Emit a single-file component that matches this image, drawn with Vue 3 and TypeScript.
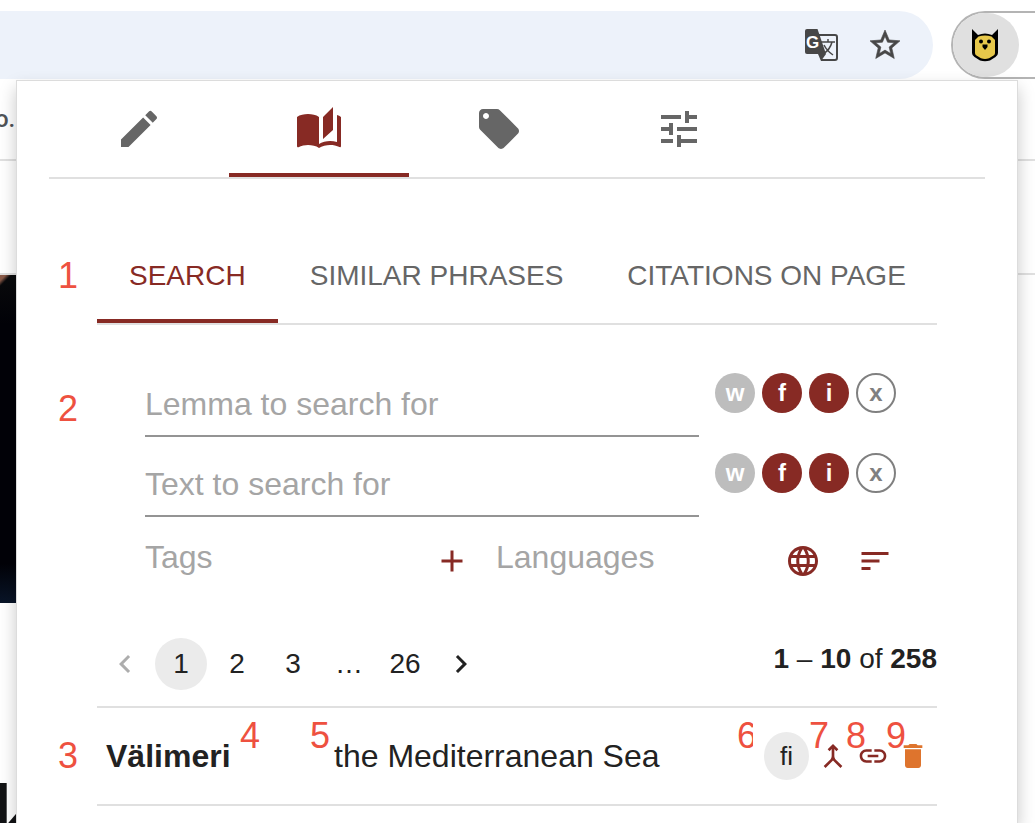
<script setup lang="ts">
import { ref } from 'vue'

interface IconTab {
  id: string
  label: string
  path: string
}

interface SearchField {
  id: string
  placeholder: string
}

interface MatchMode {
  key: string
  label: string
  tone: 'muted' | 'solid' | 'outline'
}

const iconTabs: IconTab[] = [
  {
    id: 'edit',
    label: 'Edit',
    path: 'M3 17.25V21h3.75L17.81 9.94l-3.75-3.75L3 17.25zM20.71 7.04c.39-.39.39-1.02 0-1.41l-2.34-2.34a.9959.9959 0 0 0-1.41 0l-1.83 1.83 3.75 3.75 1.83-1.83z',
  },
  {
    id: 'book',
    label: 'Dictionary',
    path: 'm19 1-5 5v11l5-4.5V1zM1 6v14.65c0 .25.25.5.5.5.1 0 .15-.05.25-.05C3.1 20.45 5.05 20 6.5 20c1.95 0 4.05.4 5.5 1.5V6c-1.45-1.1-3.55-1.5-5.5-1.5S2.45 4.9 1 6zm22 13.5V6c-.6-.45-1.25-.75-2-1v13.5c-1.1-.35-2.3-.5-3.5-.5-1.7 0-4.15.65-5.5 1.5v2c1.35-.85 3.8-1.5 5.5-1.5 1.65 0 3.35.3 4.75 1.05.1.05.15.05.25.05.25 0 .5-.25.5-.5v-1.1z',
  },
  {
    id: 'tags',
    label: 'Tags',
    path: 'M21.41 11.58l-9-9C12.05 2.22 11.55 2 11 2H4c-1.1 0-2 .9-2 2v7c0 .55.22 1.05.59 1.42l9 9c.36.36.86.58 1.41.58s1.05-.22 1.41-.59l7-7c.37-.36.59-.86.59-1.41s-.23-1.06-.59-1.42zM5.5 7C4.67 7 4 6.33 4 5.5S4.67 4 5.5 4 7 4.67 7 5.5 6.33 7 5.5 7z',
  },
  {
    id: 'settings',
    label: 'Settings',
    path: 'M3 17v2h6v-2H3zM3 5v2h10V5H3zm10 16v-2h8v-2h-8v-2h-2v6h2zM7 9v2H3v2h4v2h2V9H7zm14 4v-2H11v2h10zm-6-4h2V7h4V5h-4V3h-2v6z',
  },
]

const textTabs = ['SEARCH', 'SIMILAR PHRASES', 'CITATIONS ON PAGE']

const fields: SearchField[] = [
  { id: 'lemma', placeholder: 'Lemma to search for' },
  { id: 'text', placeholder: 'Text to search for' },
]

const modes: MatchMode[] = [
  { key: 'w', label: 'Whole word', tone: 'muted' },
  { key: 'f', label: 'Fuzzy', tone: 'solid' },
  { key: 'i', label: 'Ignore case', tone: 'solid' },
  { key: 'x', label: 'Regular expression', tone: 'outline' },
]

const activeIconTab = ref('book')
const activeTextTab = ref('SEARCH')
const page = ref(1)
const values = ref<Record<string, string>>({ lemma: '', text: '' })
const tags = ref('')
const languages = ref('')

const rowActions = [
  {
    id: 'merge',
    label: 'Merge',
    path: 'M6.41 21 5 19.59l4.83-4.83c.75-.75 1.17-1.77 1.17-2.83v-5.1L9.41 8.41 8 7l4-4 4 4-1.41 1.41L13 6.83v5.1c0 1.06.42 2.08 1.17 2.83L19 19.59 17.59 21 12 15.41 6.41 21z',
  },
  {
    id: 'link',
    label: 'Link',
    path: 'M3.9 12c0-1.71 1.39-3.1 3.1-3.1h4V7H7c-2.76 0-5 2.24-5 5s2.24 5 5 5h4v-1.9H7c-1.71 0-3.1-1.39-3.1-3.1zM8 13h8v-2H8v2zm9-6h-4v1.9h4c1.71 0 3.1 1.39 3.1 3.1s-1.39 3.1-3.1 3.1h-4V17h4c2.76 0 5-2.24 5-5s-2.24-5-5-5z',
  },
  {
    id: 'delete',
    label: 'Delete',
    path: 'M6 19c0 1.1.9 2 2 2h8c1.1 0 2-.9 2-2V7H6v12zM19 4h-3.5l-1-1h-5l-1 1H5v2h14V4z',
  },
]
</script>

<template>
  <div class="window">
    <div class="backdrop">
      <div class="site-bar"><span>o.</span></div>
      <div class="site-space"></div>
      <div class="photo"></div>
      <div class="headline">k</div>
    </div>

    <header class="toolbar">
      <div class="omnibox">
        <button class="tool" type="button" aria-label="Translate this page">
          <svg class="translate" viewBox="0 0 34 34">
            <path class="sheet" d="M15 7h16a2 2 0 0 1 2 2v21a2 2 0 0 1-2 2H17" />
            <g class="ideograph">
              <path d="M17 14h14M24 11v3M28 14q-2 8-9 12M20 17q3 6 9 10" />
            </g>
            <path d="M3 1h10.500l8.500 25H3a2 2 0 0 1-2-2V3a2 2 0 0 1 2-2z" />
            <path d="M14 26h8l-5 7z" />
            <text class="latin" x="2" y="20">G</text>
          </svg>
        </button>
        <button class="tool" type="button" aria-label="Bookmark this page">
          <svg class="icon-36 star" viewBox="0 0 24 24">
            <path d="M22 9.240l-7.190-.62L12 2 9.190 8.630 2 9.240l5.460 4.730L5.820 21 12 17.270 18.180 21l-1.630-7.030L22 9.240zM12 15.400l-3.760 2.270 1-4.280-3.320-2.880 4.380-.38L12 6.100l1.710 4.040 4.380.38-3.320 2.880 1 4.280L12 15.400z" />
          </svg>
        </button>
      </div>
      <div class="extensions">
        <button class="owl" type="button" aria-label="Open dictionary">
          <svg viewBox="0 0 28 34">
            <path d="M1 1l6 6q7-3 14 0l6-6v24q0 2.500-2.500 4L19 32.500q-5 1.500-10 0L3.500 29Q1 27.500 1 25z" />
            <path class="face" d="M7.500 8.500q6.500-2 13 0L24 12v13q0 1.500-1.500 2.500L18 30.300q-4 1.200-8 0l-4.500-2.800Q4 26.500 4 25V12z" />
            <circle cx="10" cy="13.500" r="2" />
            <circle cx="18" cy="13.500" r="2" />
            <path d="M11.500 16.500h5v2.500L14 22l-2.500-3z" />
          </svg>
        </button>
      </div>
    </header>

    <main class="popup">
      <nav class="icon-tabs" aria-label="Sections">
        <button
          v-for="tab in iconTabs"
          :key="tab.id"
          type="button"
          :aria-label="tab.label"
          :class="{ active: activeIconTab === tab.id }"
          @click="activeIconTab = tab.id"
        >
          <svg viewBox="0 0 24 24"><path :d="tab.path" /></svg>
        </button>
      </nav>

      <section class="panel">
        <nav class="text-tabs" aria-label="Search modes">
          <span class="note n1">1</span>
          <button
            v-for="tab in textTabs"
            :key="tab"
            type="button"
            :class="{ active: activeTextTab === tab }"
            @click="activeTextTab = tab"
          >
            {{ tab }}
          </button>
        </nav>

        <form class="search" @submit.prevent>
          <span class="note n2">2</span>
          <div v-for="field in fields" :key="field.id" class="field-row">
            <input
              v-model="values[field.id]"
              class="field lined"
              type="text"
              :placeholder="field.placeholder"
              :aria-label="field.placeholder"
            />
            <div class="modes">
              <button
                v-for="mode in modes"
                :key="mode.key"
                type="button"
                :class="mode.tone"
                :aria-label="mode.label"
              >
                {{ mode.key }}
              </button>
            </div>
          </div>
          <div class="filter-row">
            <input v-model="tags" class="field" type="text" placeholder="Tags" aria-label="Tags" />
            <button class="filter-button add" type="button" aria-label="Add tag">
              <svg class="icon-36" viewBox="0 0 24 24"><path d="M19 13h-6v6h-2v-6H5v-2h6V5h2v6h6v2z" /></svg>
            </button>
            <input v-model="languages" class="field" type="text" placeholder="Languages" aria-label="Languages" />
            <button class="filter-button" type="button" aria-label="Choose languages">
              <svg class="icon-36" viewBox="0 0 24 24">
                <path d="M11.990 2C6.470 2 2 6.480 2 12s4.470 10 9.990 10C17.520 22 22 17.520 22 12S17.520 2 11.990 2zm6.930 6h-2.950c-.32-1.250-.78-2.450-1.380-3.560 1.840.63 3.370 1.910 4.330 3.560zM12 4.040c.83 1.200 1.480 2.530 1.910 3.960h-3.820c.43-1.430 1.080-2.760 1.910-3.960zM4.260 14C4.100 13.360 4 12.690 4 12s.1-1.360.26-2h3.380c-.08.66-.14 1.320-.14 2 0 .68.06 1.340.14 2H4.260zm.82 2h2.950c.32 1.250.78 2.450 1.380 3.560-1.840-.63-3.370-1.900-4.330-3.560zm2.950-8H5.080c.96-1.660 2.490-2.930 4.330-3.560C8.810 5.550 8.350 6.750 8.030 8zM12 19.960c-.83-1.200-1.480-2.530-1.910-3.960h3.820c-.43 1.430-1.080 2.760-1.910 3.960zM14.340 14H9.660c-.09-.66-.16-1.320-.16-2 0-.68.07-1.350.16-2h4.680c.09.65.16 1.320.16 2 0 .68-.07 1.340-.16 2zm.25 5.560c.6-1.110 1.060-2.310 1.380-3.560h2.950c-.96 1.650-2.490 2.930-4.330 3.560zM16.360 14c.08-.66.14-1.320.14-2 0-.68-.06-1.340-.14-2h3.380c.16.64.26 1.310.26 2s-.1 1.360-.26 2h-3.380z" />
              </svg>
            </button>
            <button class="filter-button" type="button" aria-label="Sort">
              <svg class="icon-36" viewBox="0 0 24 24"><path d="M3 18h6v-2H3v2zM3 6v2h18V6H3zm0 7h12v-2H3v2z" /></svg>
            </button>
          </div>
        </form>

        <div class="results-bar">
          <nav class="pages" aria-label="Pages">
            <button type="button" disabled aria-label="Previous page">
              <svg class="icon-36" viewBox="0 0 24 24"><path d="M15.410 7.410 14 6l-6 6 6 6 1.410-1.410L10.830 12z" /></svg>
            </button>
            <button
              v-for="n in [1, 2, 3]"
              :key="n"
              type="button"
              :class="{ current: page === n }"
              @click="page = n"
            >
              {{ n }}
            </button>
            <span class="gap">…</span>
            <button type="button" :class="{ current: page === 26 }" @click="page = 26">26</button>
            <button type="button" aria-label="Next page">
              <svg class="icon-36" viewBox="0 0 24 24"><path d="M10 6 8.590 7.410 13.170 12l-4.580 4.590L10 18l6-6z" /></svg>
            </button>
          </nav>
          <p class="range"><b>1</b> – <b>10</b> of <b>258</b></p>
        </div>

        <article class="result">
          <strong class="lemma">Välimeri</strong>
          <span class="meaning">the Mediterranean Sea</span>
          <span class="language">fi</span>
          <button
            v-for="action in rowActions"
            :key="action.id"
            class="action"
            :class="action.id"
            type="button"
            :aria-label="action.label"
          >
            <svg viewBox="0 0 24 24"><path :d="action.path" /></svg>
          </button>
          <span class="note n3">3</span>
          <span class="note n4">4</span>
          <span class="note n5">5</span>
          <span class="note n6">6</span>
          <span class="note n7">7</span>
          <span class="note n8">8</span>
          <span class="note n9">9</span>
        </article>
      </section>
    </main>
  </div>
</template>

<style>
body {
  margin: 0;
  background: #fff;
}
</style>

<style scoped>
.window {
  --accent: #872a24;
  position: relative;
  min-height: 100vh;
  overflow: hidden;
  background: #fff;
  color: #222;
  font-family: "Liberation Sans", Arial, sans-serif;
}
* {
  box-sizing: border-box;
}
button {
  display: flex;
  align-items: center;
  justify-content: center;
  margin: 0;
  padding: 0;
  border: 0;
  background: none;
  color: inherit;
  font: inherit;
  cursor: pointer;
}
svg {
  display: block;
  fill: currentColor;
}
.icon-36 {
  width: 36px;
  height: 36px;
}

/* page behind the popup */
.backdrop {
  position: absolute;
  inset: 79px 0 0;
}
.site-bar {
  height: 82px;
  border-bottom: 2px solid #e0e0e0;
  font: 500 24px/80px Roboto, sans-serif;
  color: #505357;
}
.site-bar span {
  margin-left: -5px;
}
.site-space {
  height: 114px;
  border-bottom: 2px solid #e0e0e0;
}
.photo {
  width: 48px;
  height: 328px;
  background:
    linear-gradient(135deg, #8a5a48 4px, transparent 8px),
    linear-gradient(#0a0b0d, #020208 15%, #020208 88%, #091528);
}
.headline {
  margin: 168px 0 0 -14px;
  font-size: 100px;
  line-height: 100px;
  font-weight: 700;
  color: #121315;
}

/* browser toolbar */
.toolbar {
  position: relative;
  display: flex;
  gap: 18px;
  height: 80px;
  padding-top: 11px;
}
.omnibox {
  flex: 1;
  display: flex;
  align-items: center;
  justify-content: flex-end;
  gap: 29px;
  height: 68px;
  padding-right: 30px;
  border-radius: 0 34px 34px 0;
  background: #edf2fa;
  color: #474747;
}
.translate {
  width: 34px;
  height: 34px;
}
.translate .sheet,
.translate .ideograph {
  fill: none;
  stroke: #474747;
  stroke-width: 2;
}
.translate .ideograph {
  stroke-width: 1.5;
}
.translate .latin {
  fill: #fff;
  font: 700 17px "Liberation Sans", sans-serif;
}
.star {
  stroke: currentColor;
  stroke-width: 0.4;
}
.extensions {
  width: 84px;
  height: 68px;
  border: 2px solid #b4b4b4;
  border-right: 0;
  border-radius: 34px 0 0 34px;
}
.owl {
  width: 66px;
  height: 64px;
  padding-right: 2px;
  border-radius: 32px;
  background: #e0e0e0;
  color: #000;
}
.owl svg {
  width: 28px;
  height: 34px;
}
.owl .face {
  fill: #e7c84b;
}

/* popup */
.popup {
  position: relative;
  min-height: calc(100vh - 80px);
  margin: 0 17px 0 16px;
  padding: 0 32px;
  border: 1px solid #dcdcdc;
  border-bottom: 0;
  background: #fff;
  box-shadow: 0 8px 16px rgba(0, 0, 0, 0.22);
}
.icon-tabs,
.text-tabs {
  display: flex;
  border-bottom: 2px solid #e0e0e0;
  color: #666;
}
.icon-tabs button,
.text-tabs button {
  height: 96px;
  border-top: 4px solid transparent;
  border-bottom: 4px solid transparent;
}
.icon-tabs button {
  width: 180px;
}
.icon-tabs svg {
  width: 48px;
  height: 48px;
}
.icon-tabs .active,
.text-tabs .active {
  color: var(--accent);
  border-bottom-color: var(--accent);
}
.panel {
  padding: 48px 48px 0;
}
.text-tabs {
  position: relative;
}
.text-tabs button {
  padding: 2px 32px 0;
  font-size: 28px;
  white-space: nowrap;
}

.search {
  position: relative;
  padding: 32px 0 0 48px;
}
.field-row {
  display: flex;
  align-items: flex-start;
  gap: 16px;
  padding-top: 16px;
}
.field {
  flex: 1;
  min-width: 0;
  height: 64px;
  padding: 0;
  border: 0;
  outline: 0;
  background: none;
  color: #222;
  font: 32px "Liberation Sans", Arial, sans-serif;
}
.field::placeholder {
  color: #a5a5a5;
  opacity: 1;
}
.lined {
  border-bottom: 2px solid #949494;
}
.modes {
  display: flex;
  gap: 7px;
  width: 222px;
}
.modes button {
  width: 40px;
  height: 40px;
  border-radius: 50%;
  font-size: 24px;
  font-weight: 700;
}
.modes .muted {
  background: #bdbdbd;
  color: #fff;
}
.modes .solid {
  background: var(--accent);
  color: #fff;
}
.modes .outline {
  border: 2px solid #808080;
  color: #808080;
}
.filter-row {
  display: flex;
  align-items: flex-start;
  margin-top: 8px;
  padding-right: 26px;
}
.filter-button {
  width: 72px;
  height: 72px;
  color: var(--accent);
}
.add {
  margin-right: 8px;
}

.results-bar {
  display: flex;
  justify-content: space-between;
  margin-top: 41px;
  padding-bottom: 16px;
  border-bottom: 2px solid #e0e0e0;
  font-size: 28px;
}
.pages {
  display: flex;
  gap: 4px;
  padding-left: 2px;
}
.pages button,
.gap {
  width: 52px;
  height: 52px;
  border-radius: 50%;
  line-height: 52px;
  text-align: center;
}
.pages button:disabled {
  color: #adadad;
}
.pages .current {
  background: #ebebeb;
}
.range {
  margin: 0;
  line-height: 42px;
}

.result {
  position: relative;
  display: flex;
  align-items: center;
  height: 98px;
  padding: 0 4px 0 9px;
  border-bottom: 2px solid #e0e0e0;
  font-size: 32px;
}
.lemma {
  width: 228px;
}
.meaning {
  flex: 1;
}
.language {
  width: 45px;
  height: 48px;
  margin-right: 4px;
  border-radius: 50%;
  background: #ebebeb;
  font-size: 26px;
  line-height: 48px;
  text-align: center;
}
.action {
  width: 40px;
  height: 48px;
  color: var(--accent);
}
.action svg {
  width: 32px;
  height: 32px;
}
.action.delete {
  color: #de742d;
}

/* numbered callouts lying over the popup */
.note {
  position: absolute;
  color: #ee5140;
  font-size: 36px;
  line-height: 42px;
}
.n1 {
  top: 28px;
  left: -39px;
}
.n2 {
  top: 63px;
  left: -39px;
}
.n3 {
  top: 27px;
  left: -39px;
}
.n4,
.n5,
.n6,
.n7,
.n8,
.n9 {
  top: 7px;
}
.n4 {
  left: 143px;
}
.n5 {
  left: 213px;
}
.n6 {
  right: 184px;
  width: 16px;
  overflow: hidden;
}
.n7 {
  right: 108px;
}
.n8 {
  right: 71px;
}
.n9 {
  right: 31px;
}
</style>
